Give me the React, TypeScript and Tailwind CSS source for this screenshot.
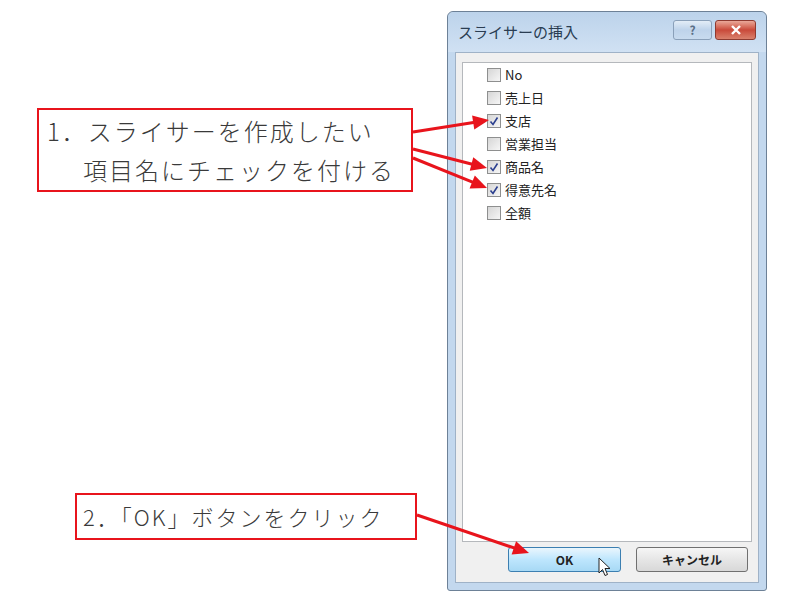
import React from "react";

const jp = { fontFamily: '"Noto Sans CJK JP", "Noto Sans", sans-serif' };

type Arrow = { x1: number; y1: number; x2: number; y2: number };

const arrows: Arrow[] = [
  { x1: 413, y1: 132, x2: 489, y2: 120 },
  { x1: 413, y1: 149, x2: 487, y2: 168 },
  { x1: 413, y1: 158, x2: 487, y2: 188 },
  { x1: 417, y1: 515, x2: 529, y2: 553 },
];

const head = (a: Arrow) => {
  const ang = Math.atan2(a.y2 - a.y1, a.x2 - a.x1);
  const len = 16;
  const half = 7;
  const bx = a.x2 - Math.cos(ang) * len;
  const by = a.y2 - Math.sin(ang) * len;
  const px = -Math.sin(ang) * half;
  const py = Math.cos(ang) * half;
  return `${a.x2},${a.y2} ${bx + px},${by + py} ${bx - px},${by - py}`;
};

const items = [
  { label: "No", checked: false },
  { label: "売上日", checked: false },
  { label: "支店", checked: true },
  { label: "営業担当", checked: false },
  { label: "商品名", checked: true },
  { label: "得意先名", checked: true },
  { label: "全額", checked: false },
];

const CheckBox = ({ checked }: { checked: boolean }) => (
  <span className="w-[14px] h-[14px] border border-[#8e8f8f] bg-gradient-to-br from-[#d6d6d6] to-[#f6f6f6] flex items-center justify-center shrink-0">
    {checked && (
      <svg width="10" height="10" viewBox="0 0 10 10">
        <path d="M1.5 5.5 L4 8.5 L8.5 1.5" fill="none" stroke="#2b3f8f" strokeWidth="1.6" />
      </svg>
    )}
  </span>
);

const App = () => {
  return (
    <div className="relative w-[800px] h-[600px] bg-white flex overflow-hidden" style={jp}>
      <div className="w-[447px] flex flex-col">
        <div className="mt-[108px] ml-[37px] w-[376px] h-[84px] border-2 border-[#e8141c] flex flex-col justify-center pl-[8px] text-[24px] tracking-[2px] text-[#3a3a3a] font-light leading-[39px]">
          <div>1．スライサーを作成したい</div>
          <div className="pl-[36px]">項目名にチェックを付ける</div>
        </div>
        <div className="mt-[301px] ml-[75px] w-[342px] h-[47px] border-2 border-[#e8141c] flex items-center pl-[6px] text-[22px] tracking-[2px] text-[#3a3a3a] font-light">
          2．「OK」ボタンをクリック
        </div>
      </div>

      <div className="mt-[11px] w-[320px] h-[580px] border border-[#6d8197] rounded-t-[6px] rounded-b-[3px] bg-[#c3d8ee] flex flex-col">
        <div className="h-[40px] flex items-center pl-[10px] pr-[10px] bg-gradient-to-b from-[#bcd3eb] to-[#d0e1f3] rounded-t-[6px]">
          <span className="text-[15px] text-[#2a3d52]">スライサーの挿入</span>
          <div className="ml-auto flex gap-[3px] mt-[-4px]">
            <div className="w-[39px] h-[20px] rounded-[3px] border border-[#8aa0b9] bg-gradient-to-b from-[#e3edf7] via-[#bed3ea] to-[#c8dbef] flex items-center justify-center text-[12px] font-bold text-[#5a6e86]">
              ?
            </div>
            <div className="w-[41px] h-[20px] rounded-[3px] border border-[#8e3a30] bg-gradient-to-b from-[#e9a899] via-[#c9493a] to-[#d9806c] flex items-center justify-center">
              <svg width="12" height="10" viewBox="0 0 12 10">
                <path d="M2 1 L10 9 M10 1 L2 9" stroke="#ffffff" strokeWidth="2.4" />
              </svg>
            </div>
          </div>
        </div>
        <div className="flex-1 mx-[7px] mb-[7px] bg-[#f0f0f0] border border-[#9fb2c7] flex flex-col px-[6px] pt-[9px] pb-[10px]">
          <div className="flex-1 bg-white border border-[#b5b8bc] flex flex-col pl-[24px] pt-0">
            {items.map((it) => (
              <div key={it.label} className="h-[23px] flex items-center gap-[4px] text-[13px] text-[#222]">
                <CheckBox checked={it.checked} />
                <span>{it.label}</span>
              </div>
            ))}
          </div>
          <div className="flex justify-end gap-[15px] mt-[5px] pr-[4px]">
            <div className="relative w-[113px] h-[25px] rounded-[3px] border border-[#3c7fb1] bg-gradient-to-b from-[#eaf6fd] via-[#bee6fd] to-[#a7d9f5] flex items-center justify-center text-[12px] font-bold text-[#222]">
              OK
              <svg className="absolute left-[89px] top-[9px]" width="13" height="20" viewBox="0 0 13 20">
                <path d="M1 1 L1 16 L4.5 12.5 L7 18.5 L9.5 17.5 L7 11.5 L12 11.5 Z" fill="#ffffff" stroke="#222" strokeWidth="1" />
              </svg>
            </div>
            <div className="w-[112px] h-[25px] rounded-[3px] border border-[#707070] bg-gradient-to-b from-[#f6f6f6] via-[#e6e6e6] to-[#d8d8d8] flex items-center justify-center text-[12px] font-bold text-[#222]">
              キャンセル
            </div>
          </div>
        </div>
      </div>

      <svg className="absolute inset-0 pointer-events-none" width="800" height="600">
        {arrows.map((a, i) => (
          <g key={i}>
            <line x1={a.x1} y1={a.y1} x2={a.x2 - (a.x2 - a.x1) * 0.12} y2={a.y2 - (a.y2 - a.y1) * 0.12} stroke="#e8141c" strokeWidth="3" />
            <polygon points={head(a)} fill="#e8141c" />
          </g>
        ))}
      </svg>
    </div>
  );
};

export default App;
